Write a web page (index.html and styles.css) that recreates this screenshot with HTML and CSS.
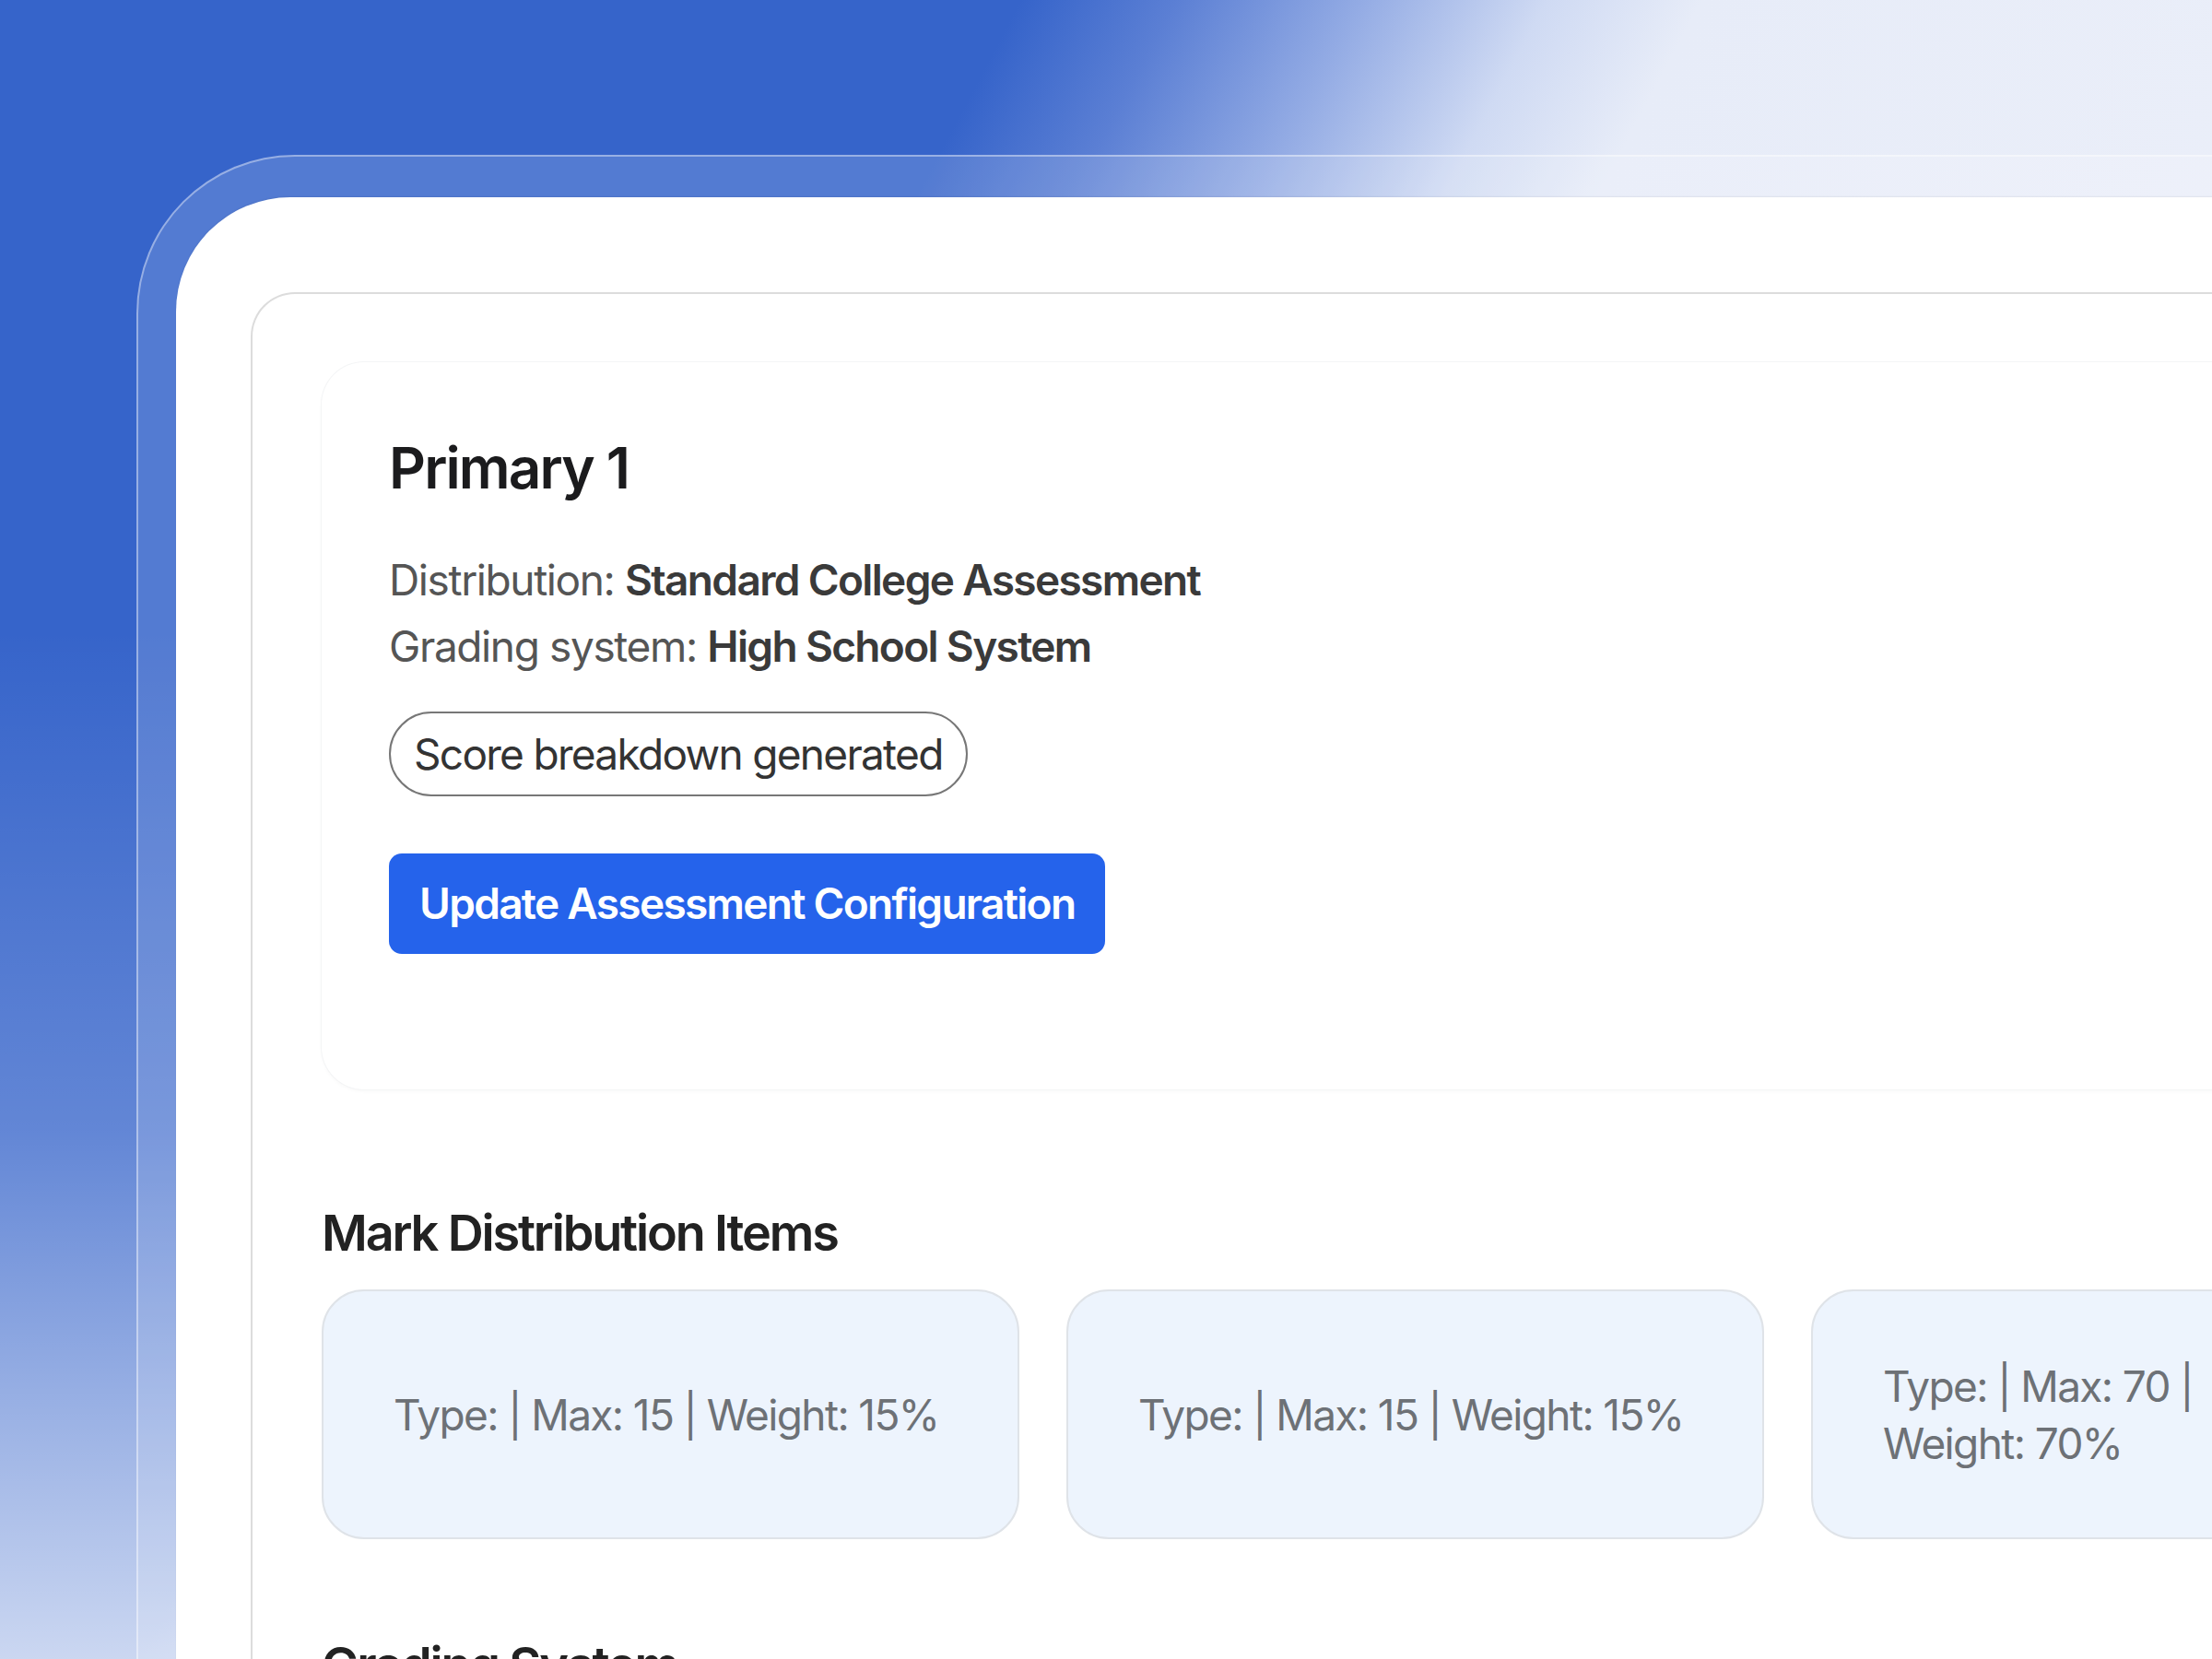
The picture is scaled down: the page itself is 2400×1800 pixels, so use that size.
FILE: index.html
```html
<!DOCTYPE html>
<html lang="en">
<head>
  <meta charset="UTF-8">
  <title>Assessment Configuration</title>
  <link rel="stylesheet" href="styles.css">
</head>
<body>

  <div class="backdrop">
    <div class="frame">
      <div class="window">

        <section class="config">
          <div class="summary">
            <h1>Primary 1</h1>
            <p class="meta">Distribution: <strong>Standard College Assessment</strong></p>
            <p class="meta">Grading system: <strong>High School System</strong></p>
            <span class="pill">Score breakdown generated</span>
            <div>
              <button class="btn-primary">Update Assessment Configuration</button>
            </div>
          </div>

          <h2 class="section-title">Mark Distribution Items</h2>
          <div class="items">
            <div class="item">Type: | Max: 15 | Weight: 15%</div>
            <div class="item">Type: | Max: 15 | Weight: 15%</div>
            <div class="item">Type: | Max: 70 | Weight: 70%</div>
          </div>

          <h2 class="section-title grading">Grading System</h2>
        </section>

      </div>
    </div>
  </div>

</body>
</html>
```

FILE: styles.css
```css
html, body {
  margin: 0;
  height: 100%;
  overflow: hidden;
}

body {
  font-family: Inter, "Liberation Sans", sans-serif;
  color: #1d1d1f;
}

.backdrop {
  height: 100%;
  padding: 168px 0 0 148px;
  box-sizing: border-box;
  background:
    linear-gradient(180deg, rgba(255,255,255,0) 38%, rgba(255,255,255,0.22) 68%, rgba(255,255,255,0.74) 100%),
    linear-gradient(118deg, #3664ca 0%, #3664ca 33%, #5b7fd4 38%, #93abe4 44%, #cfdaf3 50%, #e7ecf8 55%, #eef1fa 100%);
}

.frame {
  width: 2600px;
  height: 2000px;
  padding: 44px 0 0 41px;
  box-sizing: border-box;
  background: rgba(255,255,255,0.15);
  border-top: 2px solid rgba(255,255,255,0.4);
  border-left: 2px solid rgba(255,255,255,0.4);
  border-top-left-radius: 172px;
}

.window {
  height: 100%;
  background: #fff;
  border-top-left-radius: 124px;
  padding: 103px 0 0 81px;
  box-sizing: border-box;
  box-shadow: 0 -1px 2px rgba(0,0,0,0.06);
}

.config {
  height: 100%;
  border: 2px solid #dcdcdc;
  border-right: none;
  border-top-left-radius: 48px;
  padding: 74px 0 0 75px;
  box-sizing: border-box;
}

.summary {
  padding: 77px 77px 147px 73px;
  border-radius: 46px;
  box-shadow: 0 0 0 1px #f4f5f6, 0 2px 4px rgba(0,0,0,0.03);
}

h1 {
  margin: 0;
  font-size: 62px;
  line-height: 75px;
  font-weight: 600;
  letter-spacing: -0.03em;
  color: #1b1b1d;
}

.meta {
  margin: 0;
  font-size: 46px;
  line-height: 72px;
  letter-spacing: -0.03em;
  color: #555;
}

h1 + .meta {
  margin-top: 48px;
}

.meta strong {
  font-weight: 600;
  letter-spacing: -0.036em;
  color: #3a3a3a;
}

.pill {
  display: inline-block;
  margin-top: 35px;
  padding: 16px 25px;
  font-size: 46px;
  line-height: 56px;
  letter-spacing: -0.037em;
  color: #333;
  border: 2px solid #777;
  border-radius: 60px;
}

.btn-primary {
  margin-top: 62px;
  padding: 26px 33px;
  font-family: inherit;
  font-size: 46px;
  line-height: 57px;
  font-weight: 600;
  letter-spacing: -0.037em;
  color: #fff;
  background: #2563eb;
  border: none;
  border-radius: 14px;
}

.section-title {
  margin: 123px 0 28px;
  font-size: 54px;
  line-height: 66px;
  font-weight: 600;
  letter-spacing: -0.04em;
  color: #222;
}

.section-title.grading {
  margin-top: 104px;
}

.items {
  display: grid;
  grid-template-columns: 757px 757px 560px;
  gap: 51px;
}

.item {
  height: 271px;
  box-sizing: border-box;
  display: flex;
  align-items: center;
  padding: 0 50px 0 76px;
  font-size: 46px;
  line-height: 62px;
  letter-spacing: -0.035em;
  color: #6d7176;
  background: #edf4fd;
  border: 2px solid #dfe3e8;
  border-radius: 46px;
}
```
